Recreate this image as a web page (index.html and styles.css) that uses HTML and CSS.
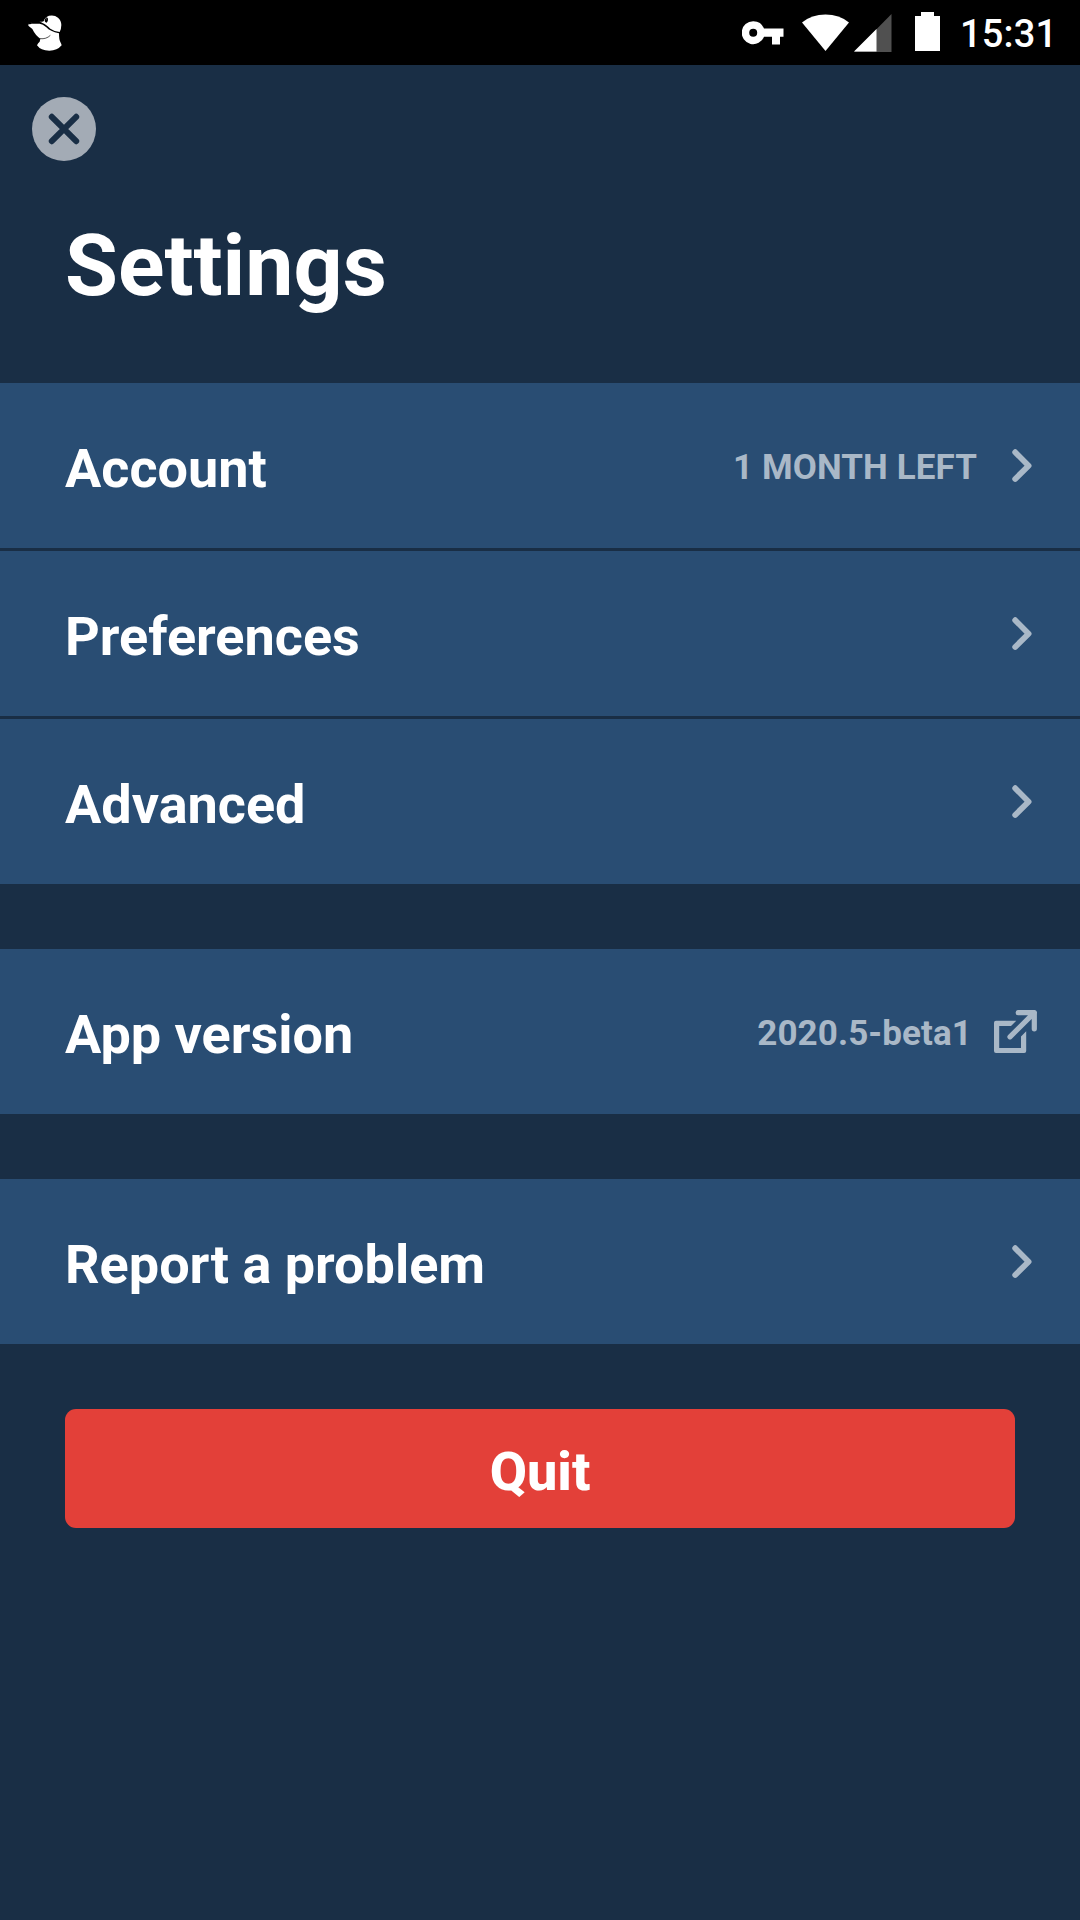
FILE: index.html
```html
<!DOCTYPE html>
<html lang="en">
<head>
<meta charset="utf-8">
<title>Settings</title>
<link rel="stylesheet" href="styles.css">
</head>
<body>
<svg class="symbols" width="0" height="0" aria-hidden="true">
  <symbol id="chevron" viewBox="0 0 20 34"><path d="M3.2 3.2 16.6 16.7 3.2 30" fill="none" stroke="currentColor" stroke-width="5.8" stroke-linecap="round" stroke-linejoin="round"/></symbol>
</svg>
<header class="status-bar">
  <svg class="mole" viewBox="84 46 102 108" aria-hidden="true">
    <path fill="#fff" d="M86 72 Q89 75 95 72.500L119 72Q128 73 139 83Q150 95 177 101Q177 120 181 127Q184 132 185 137Q172 153 148 153Q122 153 111 137Q114 130 119 126L121 117Q106 107 97 88L85 78Z"/>
    <path fill="#fff" d="M118 66.500Q125 67 131 65Q134 53 147 48.500Q163 45 174 54Q184 63 184 76Q184 87 179 97Q162 95 151 87Q138 74 129 70.500Q124 68 118 66.500Z"/>
    <path fill="#000" d="M139 52.500Q143 53 144 57Q145 64 140 69Q134 68 134 63Q134 57 139 52.500Z"/>
    <path fill="none" stroke="#000" stroke-width="2" d="M120 117Q139 119 151 107"/>
    <path fill="none" stroke="#777" stroke-width="1.500" d="M139 61Q139 57 141 55M94 69l2 2"/>
  </svg>
  <div class="indicators">
    <svg class="key" viewBox="0 0 42 24" aria-hidden="true"><path fill="#fff" fill-rule="evenodd" d="M11.200 0.200A11.500 11.500 0 0 1 22 7.600H41.500V15.700H38V23.500H30V15.700H22A11.500 11.500 0 1 1 11.200.200ZM11.200 7.700a4 4 0 1 0 0 8 4 4 0 0 0 0-8Z"/></svg>
    <svg class="wifi" viewBox="0 0 48 38" aria-hidden="true"><path fill="#fff" d="M24 37.500 0 8.300Q10 .2 24 .2T48 8.300Z"/></svg>
    <svg class="signal" viewBox="0 0 38 38" aria-hidden="true"><path fill="#505050" d="M0 38 37.500 0V38Z"/><path fill="#fff" d="M0 37.500 22.500 15V37.500Z"/></svg>
    <svg class="battery" viewBox="0 0 25 39" aria-hidden="true"><path fill="#fff" d="M6 0H19V4H25V39H0V4H6Z"/></svg>
    <span class="clock">15:31</span>
  </div>
</header>
<main>
  <button class="close" aria-label="Close">
    <svg viewBox="0 0 64 64" aria-hidden="true"><circle cx="32" cy="32" r="32" fill="#a3abb5"/><path d="M19.800 19.800 44.200 44.200M44.200 19.800 19.800 44.200" stroke="#192e45" stroke-width="6" stroke-linecap="round"/></svg>
  </button>
  <h1 class="title">Settings</h1>
  <nav class="groups">
    <div class="group">
      <a class="row"><span class="label">Account</span><span class="info">1 MONTH LEFT</span><svg class="chevron"><use href="#chevron"/></svg></a>
      <a class="row"><span class="label">Preferences</span><svg class="chevron"><use href="#chevron"/></svg></a>
      <a class="row"><span class="label">Advanced</span><svg class="chevron"><use href="#chevron"/></svg></a>
    </div>
    <div class="group">
      <a class="row row-external"><span class="label">App version</span><span class="info">2020.5-beta1</span>
        <svg class="external" viewBox="0 0 43 43" aria-hidden="true"><path d="M40.300 18.800V2.700H24.200M40.300 2.700 16 26.800" fill="none" stroke="currentColor" stroke-width="5.200" stroke-linejoin="round" stroke-linecap="round"/><path fill="currentColor" d="M2 10.800H22.300L17 16H5.200V38H27V26.500L32.200 21.200V41Q32.200 43 30.200 43H2Q0 43 0 41V12.800Q0 10.800 2 10.800Z"/></svg></a>
    </div>
    <div class="group">
      <a class="row"><span class="label">Report a problem</span><svg class="chevron"><use href="#chevron"/></svg></a>
    </div>
  </nav>
  <button class="quit">Quit</button>
</main>
</body>
</html>
```
FILE: styles.css
```css
* { box-sizing: border-box; }
body {
  margin: 0;
  min-height: 1920px;
  background: #192e45;
  color: #fff;
  font-family: Roboto, sans-serif;
}
svg { display: block; flex: none; }
.symbols { display: none; }
button { border: 0; padding: 0; font: inherit; color: inherit; }

.status-bar {
  height: 65px;
  padding: 0 25px 0 28px;
  background: #000;
  display: flex;
  align-items: flex-start;
  justify-content: space-between;
}
.mole { width: 34px; height: 36px; margin-top: 15.300px; }
.indicators { display: flex; align-items: flex-start; }
.key { width: 42px; height: 24px; margin: 21px 18px 0 0; }
.wifi { width: 47px; height: 38px; margin: 14px 5px 0 0; }
.signal { width: 38px; height: 38px; margin: 14px 23px 0 0; }
.battery { width: 25px; height: 39px; margin: 12px 20px 0 0; }
.clock {
  width: 95px;
  padding-top: 12px;
  font-size: 38px;
  line-height: 45px;
  font-weight: 500;
  letter-spacing: 0.2px;
  white-space: nowrap;
}

main { padding-top: 32px; }
.close { display: block; width: 64px; height: 64px; margin-left: 32px; background: none; }
.title {
  margin: 55px 65px 67px;
  font-size: 86px;
  line-height: 100px;
  font-weight: 700;
}
.groups { display: flex; flex-direction: column; gap: 65px; }
.group { display: flex; flex-direction: column; gap: 3px; }
.row {
  height: 165px;
  padding: 0 48px 0 65px;
  display: flex;
  align-items: center;
  background: #294d73;
}
.row-external { padding-right: 43px; }
.label { flex: 1; padding-top: 6px; font-size: 54px; line-height: 64px; font-weight: 700; }
.info {
  padding-top: 4px;
  font-size: 35px;
  line-height: 42px;
  font-weight: 700;
  letter-spacing: 0.1px;
  color: #a9b8c7;
}
.chevron { width: 20px; height: 34px; margin-left: 35px; color: #a9b8c7; }
.external { width: 43px; height: 43px; margin-left: 22px; color: #a9b8c7; }
.quit {
  display: block;
  width: 950px;
  height: 119px;
  margin: 65px auto 0;
  padding-top: 6px;
  border-radius: 11px;
  background: #e34039;
  font-size: 54px;
  line-height: 64px;
  font-weight: 800;
}
```
